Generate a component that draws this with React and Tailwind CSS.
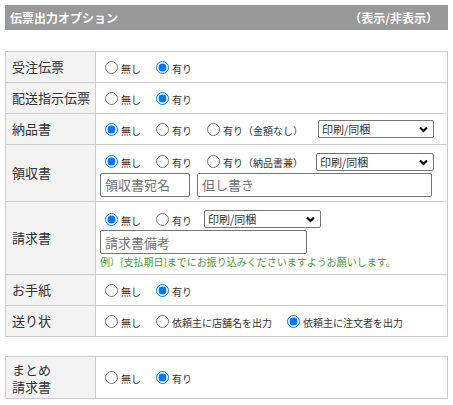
import React from 'react'

const font = { fontFamily: '"Noto Sans CJK JP", "Noto Sans", sans-serif' }

const Radio = ({ name, label, checked, last }) => (
  <label className={`inline-flex items-center shrink-0 ml-[5px] ${last ? '' : 'mr-[10px]'}`}>
    <input
      type="radio"
      name={name}
      defaultChecked={checked}
      className="w-[13px] h-[13px] m-0 mr-[3px] accent-[#0075ff]"
    />
    <span className="text-[10px] leading-[13px] pt-[2px] text-[#333]">{label}</span>
  </label>
)

const Select = ({ className = '' }) => (
  <div className={`relative shrink-0 h-[18px] ${className}`}>
    <select className="block appearance-none w-full h-[18px] border border-[#767676] rounded-[2px] bg-white pl-[3px] py-0 text-[11px] leading-[16px] text-[#333] outline-none">
      <option>印刷/同梱</option>
      <option>印刷/別送</option>
    </select>
    <svg
      className="absolute right-[6px] top-[6px] pointer-events-none"
      width="9"
      height="7"
      viewBox="0 0 9 7"
    >
      <path d="M1 1.5 L4.5 5 L8 1.5" fill="none" stroke="#000" strokeWidth="2.2" />
    </svg>
  </div>
)

const Input = ({ placeholder, className = '' }) => (
  <input
    type="text"
    placeholder={placeholder}
    className={`h-[24px] border border-[#767676] rounded-[2px] px-[4px] text-[13px] text-[#333] placeholder:text-[#757575] outline-none ${className}`}
  />
)

const Label = ({ children }) => (
  <td className="w-[90px] border border-[#ccc] bg-[#f3f3f3] pl-[6px] text-[13px] leading-[16px] text-[#333] align-middle">
    {children}
  </td>
)

const Cell = ({ children, className = '' }) => (
  <td className={`border border-[#ccc] pl-[4px] align-middle ${className}`}>{children}</td>
)

export default function App() {
  return (
    <div className="p-[5px] bg-white min-h-[405px]" style={font}>
      <div className="h-[25px] bg-[#999] flex items-center justify-between pl-[5px] pr-[10px] text-white text-[12px] font-bold">
        <span>伝票出力オプション</span>
        <span>（表示/非表示）</span>
      </div>

      <table className="w-full border-collapse mt-[21px]">
        <tbody>
          <tr className="h-[31px]">
            <Label>受注伝票</Label>
            <Cell>
              <div className="flex items-center">
                <Radio name="juchu" label="無し" />
                <Radio name="juchu" label="有り" checked />
              </div>
            </Cell>
          </tr>
          <tr className="h-[31px]">
            <Label>配送指示伝票</Label>
            <Cell>
              <div className="flex items-center">
                <Radio name="haiso" label="無し" />
                <Radio name="haiso" label="有り" checked />
              </div>
            </Cell>
          </tr>
          <tr className="h-[31px]">
            <Label>納品書</Label>
            <Cell>
              <div className="flex items-center">
                <Radio name="nohin" label="無し" checked />
                <Radio name="nohin" label="有り" />
                <Radio name="nohin" label="有り（金額なし）" />
                <Select className="w-[116px] ml-[5px]" />
              </div>
            </Cell>
          </tr>
          <tr className="h-[57px]">
            <Label>領収書</Label>
            <Cell className="pt-[7px] pb-[4px] pr-[15px]">
              <div className="flex items-center">
                <Radio name="ryoshu" label="無し" checked />
                <Radio name="ryoshu" label="有り" />
                <Radio name="ryoshu" label="有り（納品書兼）" />
                <Select className="w-[118px] ml-[3px]" />
              </div>
              <div className="flex mt-[2px] gap-[7px]">
                <Input placeholder="領収書宛名" className="w-[90px]" />
                <Input placeholder="但し書き" className="flex-1 min-w-0" />
              </div>
            </Cell>
          </tr>
          <tr className="h-[73px]">
            <Label>請求書</Label>
            <Cell className="pt-[8px] pb-[5px]">
              <div className="flex items-center">
                <Radio name="seikyu" label="無し" checked />
                <Radio name="seikyu" label="有り" />
                <Select className="w-[117px] ml-[2px]" />
              </div>
              <Input placeholder="請求書備考" className="w-[207px] mt-[2px] block" />
              <div className="text-[10px] leading-[14px] mt-[1px] text-[#4f9a34]">
                例）{'{'}支払期日{'}'}までにお振り込みくださいますようお願いします。
              </div>
            </Cell>
          </tr>
          <tr className="h-[31px]">
            <Label>お手紙</Label>
            <Cell>
              <div className="flex items-center">
                <Radio name="tegami" label="無し" />
                <Radio name="tegami" label="有り" checked />
              </div>
            </Cell>
          </tr>
          <tr className="h-[31px]">
            <Label>送り状</Label>
            <Cell>
              <div className="flex items-center">
                <Radio name="okuri" label="無し" />
                <Radio name="okuri" label="依頼主に店舗名を出力" />
                <Radio name="okuri" label="依頼主に注文者を出力" checked last />
              </div>
            </Cell>
          </tr>
        </tbody>
      </table>

      <table className="w-full border-collapse mt-[19px]">
        <tbody>
          <tr className="h-[42px]">
            <Label>
              <span className="block leading-[17px]">まとめ</span>
              <span className="block leading-[17px]">請求書</span>
            </Label>
            <Cell>
              <div className="flex items-center">
                <Radio name="matome" label="無し" />
                <Radio name="matome" label="有り" checked />
              </div>
            </Cell>
          </tr>
        </tbody>
      </table>
    </div>
  )
}
